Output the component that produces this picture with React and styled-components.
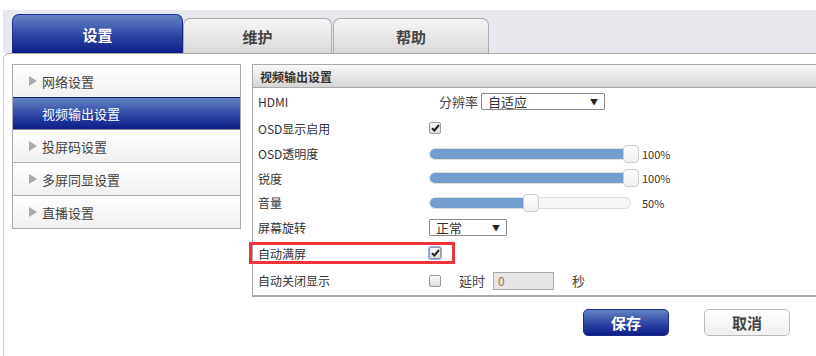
import React from "react";
import styled, { createGlobalStyle } from "styled-components";

const GlobalStyle = createGlobalStyle`
  body {
    margin: 0;
    background: #fff;
    font-family: "Noto Sans CJK SC", "DejaVu Sans", sans-serif;
    color: #333;
  }
`;

const Page = styled.div`
  width: 816px;
  height: 356px;
  padding: 10px 0 0 3px;
  box-sizing: border-box;
  overflow: hidden;
  display: flex;
  flex-direction: column;
`;

const TabBar = styled.div`
  height: 43px;
  background: #e8e9ee;
  padding-left: 9px;
  display: flex;
  align-items: flex-end;
`;

const Tab = styled.div`
  width: ${(p) => p.w}px;
  height: ${(p) => (p.$active ? 39 : 35)}px;
  margin-left: ${(p) => p.ml || 0}px;
  box-sizing: border-box;
  border: 1px solid ${(p) => (p.$active ? "#1b2a8c" : "#aaa")};
  border-bottom: none;
  border-radius: 7px 7px 0 0;
  background: ${(p) =>
    p.$active
      ? "linear-gradient(#6384c4, #2c46a4 55%, #0e1c86)"
      : "linear-gradient(#f7f7f7, #d9d9d9)"};
  color: ${(p) => (p.$active ? "#fff" : "#444")};
  font-size: 15px;
  font-weight: bold;
  display: flex;
  align-items: center;
  justify-content: center;
`;

const Body = styled.div`
  flex: 1;
  border-top: 1px solid #aaa;
  border-left: 1px solid #ccc;
  border-top-left-radius: 6px;
  padding: 10px 0 0 8px;
  display: grid;
  grid-template-columns: 229px 1fr;
  column-gap: 11px;
  align-items: start;
`;

const Menu = styled.div`
  border: 1px solid #aaa;
  border-bottom: none;
`;

const MenuItem = styled.div`
  height: 33px;
  box-sizing: border-box;
  border-bottom: 1px solid ${(p) => (p.$active ? "#888" : "#aaa")};
  border-top: ${(p) => (p.$active ? "1px solid #0e1c60" : "none")};
  margin-top: ${(p) => (p.$active ? "-1px" : "0")};
  background: ${(p) =>
    p.$active
      ? "linear-gradient(#6384c4, #2c46a4 55%, #0e1c86)"
      : "linear-gradient(#fff, #f1f1f1)"};
  color: ${(p) => (p.$active ? "#fff" : "#444")};
  font-size: 13px;
  display: flex;
  align-items: center;
  padding-left: 16px;
  gap: 4px;
`;

const Arrow = styled.span`
  width: 0;
  height: 0;
  border-top: 5px solid transparent;
  border-bottom: 5px solid transparent;
  border-left: 8px solid ${(p) => (p.$off ? "transparent" : "#aaa")};
  margin-right: 1px;
`;

const RightCol = styled.div`
  display: flex;
  flex-direction: column;
  margin-right: -20px;
`;

const Panel = styled.div`
  border: 1px solid #aaa;
  border-right: none;
  border-bottom-width: 2px;
`;

const PanelHead = styled.div`
  height: 22px;
  border-bottom: 1px solid #aaa;
  background: linear-gradient(#fafafa, #d6d6d6);
  font-size: 12px;
  font-weight: bold;
  color: #333;
  display: flex;
  align-items: center;
  padding-left: 7px;
`;

const Row = styled.div`
  position: relative;
  height: ${(p) => p.h}px;
  display: flex;
  align-items: center;
  font-size: 12px;
  color: #333;
`;

const Label = styled.div`
  width: 176px;
  padding-left: 5px;
  box-sizing: border-box;
  flex: none;
`;

const Control = styled.div`
  display: flex;
  align-items: center;
`;

const Highlight = styled.div`
  position: absolute;
  left: -4px;
  top: 2px;
  width: 206px;
  height: 22px;
  box-sizing: border-box;
  border: 3px solid #ee3438;
  pointer-events: none;
`;

const Select = styled.div`
  width: ${(p) => p.w}px;
  height: 17px;
  box-sizing: border-box;
  border: 1px solid #8a8a8a;
  border-radius: 1px;
  background: #fff;
  font-size: 13px;
  color: #333;
  display: flex;
  align-items: center;
  justify-content: space-between;
  padding: 0 6px 0 6px;
  margin-left: ${(p) => p.ml || 0}px;
`;

const Caret = styled.span`
  font-size: 8px;
  color: #222;
`;

const Box = styled.div`
  width: 12px;
  height: 12px;
  box-sizing: border-box;
  border: 1px solid #999;
  border-radius: 2px;
  background: linear-gradient(#fcfcfc, #dcdcdc);
  box-shadow: ${(p) => (p.$focus ? "0 0 0 1px #8fb3f0" : "none")};
  display: flex;
  align-items: center;
  justify-content: center;
`;

const Track = styled.div`
  position: relative;
  width: 202px;
  height: 12px;
  box-sizing: border-box;
  border: 1px solid #ddd;
  border-radius: 6px;
  background: #f6f6f6;
  margin-right: 11px;
`;

const Fill = styled.div`
  height: 100%;
  border-radius: 6px 0 0 6px;
  background: #729fcf;
`;

const Thumb = styled.div`
  position: absolute;
  top: -4px;
  width: 16px;
  height: 18px;
  box-sizing: border-box;
  border: 1px solid #ccc;
  border-radius: 4px;
  background: linear-gradient(#fff, #f0f0f0);
`;

const Pct = styled.span`
  font-size: 11px;
  color: #333;
  min-width: 30px;
`;

const SmallText = styled.span`
  font-size: 13px;
  color: #444;
  margin: ${(p) => p.m};
`;

const DelayInput = styled.div`
  width: 61px;
  height: 18px;
  box-sizing: border-box;
  border: 1px solid #aaa;
  background: #e6e6e6;
  color: #b06a3a;
  font-size: 12px;
  display: flex;
  align-items: center;
  padding-left: 4px;
`;

const Actions = styled.div`
  display: flex;
  gap: 35px;
  justify-content: flex-end;
  padding-right: 46px;
  margin-top: 12px;
`;

const Button = styled.div`
  width: 86px;
  height: 27px;
  box-sizing: border-box;
  border-radius: 5px;
  border: 1px solid ${(p) => (p.$primary ? "#1b2a8c" : "#bbb")};
  background: ${(p) =>
    p.$primary
      ? "linear-gradient(#6384c4, #2c46a4 55%, #0e1c86)"
      : "linear-gradient(#fff, #f0f0f0)"};
  color: ${(p) => (p.$primary ? "#fff" : "#444")};
  font-size: 15px;
  font-weight: bold;
  display: flex;
  align-items: center;
  justify-content: center;
`;

const Check = ({ checked, focus }) => (
  <Box $focus={focus}>
    {checked && (
      <svg width="9" height="8" viewBox="0 0 9 8">
        <path d="M1 4.2 L3.4 6.5 L8 1" stroke="#222" strokeWidth="2" fill="none" />
      </svg>
    )}
  </Box>
);

const Slider = ({ value }) => (
  <Control>
    <Track>
      <Fill style={{ width: `${value}%` }} />
      <Thumb style={{ left: `calc(${value}% - 7px)` }} />
    </Track>
    <Pct>{value}%</Pct>
  </Control>
);

const menu = ["网络设置", "视频输出设置", "投屏码设置", "多屏同显设置", "直播设置"];

export default function App() {
  return (
    <Page>
      <GlobalStyle />
      <TabBar>
        <Tab $active w={171}>设置</Tab>
        <Tab w={149}>维护</Tab>
        <Tab w={156} ml={1}>帮助</Tab>
      </TabBar>
      <Body>
        <Menu>
          {menu.map((m, i) => (
            <MenuItem key={m} $active={i === 1}>
              <Arrow $off={i === 1} />
              {m}
            </MenuItem>
          ))}
        </Menu>
        <RightCol>
          <Panel>
            <PanelHead>视频输出设置</PanelHead>
            <Row h={27}>
              <Label>HDMI</Label>
              <Control>
                <SmallText m="0 0 0 10px">分辨率</SmallText>
                <Select w={124} ml={3}>
                  自适应<Caret>▼</Caret>
                </Select>
              </Control>
            </Row>
            <Row h={26}>
              <Label>OSD显示启用</Label>
              <Check checked />
            </Row>
            <Row h={25}>
              <Label>OSD透明度</Label>
              <Slider value={100} />
            </Row>
            <Row h={24}>
              <Label>锐度</Label>
              <Slider value={100} />
            </Row>
            <Row h={25}>
              <Label>音量</Label>
              <Slider value={50} />
            </Row>
            <Row h={25}>
              <Label>屏幕旋转</Label>
              <Select w={78}>
                正常<Caret>▼</Caret>
              </Select>
            </Row>
            <Row h={26}>
              <Highlight />
              <Label>自动满屏</Label>
              <Check checked focus />
            </Row>
            <Row h={29}>
              <Label>自动关闭显示</Label>
              <Control>
                <Check />
                <SmallText m="0 8px 0 18px">延时</SmallText>
                <DelayInput>0</DelayInput>
                <SmallText m="0 0 0 18px">秒</SmallText>
              </Control>
            </Row>
          </Panel>
          <Actions>
            <Button $primary>保存</Button>
            <Button>取消</Button>
          </Actions>
        </RightCol>
      </Body>
    </Page>
  );
}
